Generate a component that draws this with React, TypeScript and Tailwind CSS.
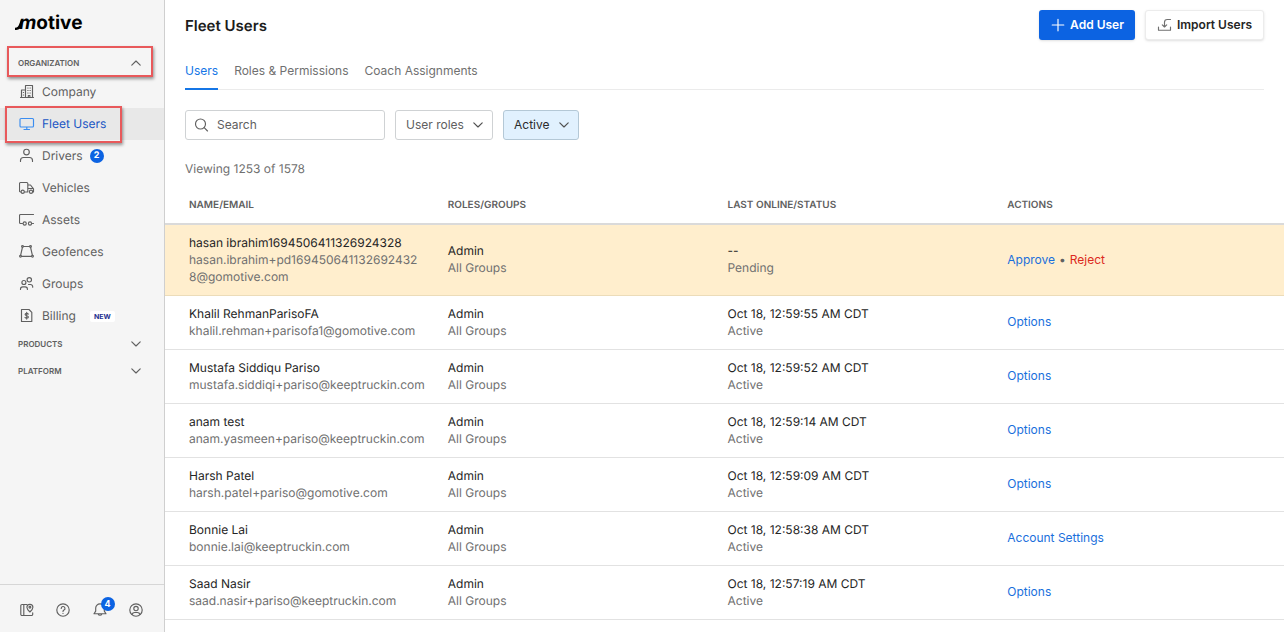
import type { ReactNode } from "react";
import clsx from "clsx";

type IconProps = {
  children: ReactNode;
  className?: string;
};

function Icon({ children, className }: IconProps) {
  return (
    <svg
      viewBox="0 0 16 16"
      fill="none"
      stroke="currentColor"
      strokeWidth="1.15"
      strokeLinecap="round"
      strokeLinejoin="round"
      aria-hidden="true"
      className={clsx("size-4 shrink-0", className)}
    >
      {children}
    </svg>
  );
}

function Chevron({ up = false, className }: { up?: boolean; className?: string }) {
  return (
    <Icon className={className}>
      <path d={up ? "M3.8 10.2 8 6l4.2 4.2" : "M3.8 5.8 8 10l4.2-4.2"} />
    </Icon>
  );
}

const navIcons = {
  company: (
    <>
      <path d="M6.5 13.5v-12h7v12M2.5 13.5V6h4M1.500 13.500h13M9.300 13.500v-2h1.600v2" />
      <path d="M8.800 4h.3M11 4h.3M8.800 6.500h.3M11 6.500h.3M8.800 9h.3M11 9h.3M4.300 8.500h.3M4.300 11h.3" />
    </>
  ),
  monitor: (
    <path d="M2 2.500h11.500a1 1 0 0 1 1 1v6.500a1 1 0 0 1-1 1H2a1 1 0 0 1-1-1v-6.500a1 1 0 0 1 1-1ZM7.800 11v2.500M5 13.500h5.500" />
  ),
  driver: (
    <>
      <circle cx="7.500" cy="4" r="2.800" />
      <path d="M1.500 13.500v-1a3 3 0 0 1 3-3h6a3 3 0 0 1 3 3v1" />
    </>
  ),
  truck: (
    <>
      <path d="M2 12H1.500a1 1 0 0 1-1-1V3.500a1 1 0 0 1 1-1h6.300a1 1 0 0 1 1 1V12H5.500M8.800 5h2.700l3 3.800V12h-.5M8.800 8.500h5.500" />
      <circle cx="3.700" cy="11.700" r="1.600" />
      <circle cx="12" cy="11.700" r="1.600" />
    </>
  ),
  trailer: (
    <>
      <path d="M14.500 2.500H1.500a1 1 0 0 0-1 1v7a1 1 0 0 0 1 1h2M13.500 11.500h1" />
      <circle cx="5.700" cy="11.500" r="1.600" />
      <circle cx="11" cy="11.500" r="1.600" />
    </>
  ),
  geofence: (
    <>
      <path d="M4.500 2.500h6M3.400 3.500l-1.800 7.800M11.600 3.500l1.800 7.800M2.500 12.300h10" />
      <circle cx="3.500" cy="2.500" r=".9" />
      <circle cx="11.500" cy="2.500" r=".9" />
      <circle cx="1.500" cy="12.300" r=".9" />
      <circle cx="13.500" cy="12.300" r=".9" />
    </>
  ),
  groups: (
    <>
      <circle cx="4.900" cy="6.500" r="2" />
      <path d="M1.500 13.500V13a2.200 2.200 0 0 1 2.200-2.200h2.500A2.200 2.200 0 0 1 8.400 13v.5" />
      <circle cx="10.300" cy="3.800" r="2.200" />
      <path d="M9.500 8.500h2a2.200 2.200 0 0 1 2.200 2.200v.5" />
    </>
  ),
  billing: (
    <>
      <path d="M2.500 1.500h7.500l2.800 2.800v9.200H2.500Z" />
      <path d="M9.300 6.100C8.900 5.500 8.400 5.300 7.700 5.300c-.9 0-1.600.4-1.600 1.200 0 1.700 3.300.8 3.300 2.500 0 .8-.7 1.200-1.700 1.200-.8 0-1.400-.3-1.700-.8M7.700 4.300v6.800" />
    </>
  ),
};

type NavItem = {
  label: string;
  icon: keyof typeof navIcons;
  active?: boolean;
  count?: number;
  isNew?: boolean;
};

const navItems: NavItem[] = [
  { label: "Company", icon: "company" },
  { label: "Fleet Users", icon: "monitor", active: true },
  { label: "Drivers", icon: "driver", count: 2 },
  { label: "Vehicles", icon: "truck" },
  { label: "Assets", icon: "trailer" },
  { label: "Geofences", icon: "geofence" },
  { label: "Groups", icon: "groups" },
  { label: "Billing", icon: "billing", isNew: true },
];

type User = {
  name: string;
  email: string;
  lastOnline: string;
  status: string;
  action?: string;
};

const users: User[] = [
  {
    name: "hasan ibrahim1694506411326924328",
    email: "hasan.ibrahim+pd1694506411326924328@gomotive.com",
    lastOnline: "--",
    status: "Pending",
  },
  {
    name: "Khalil RehmanParisoFA",
    email: "khalil.rehman+parisofa1@gomotive.com",
    lastOnline: "Oct 18, 12:59:55 AM CDT",
    status: "Active",
    action: "Options",
  },
  {
    name: "Mustafa Siddiqu Pariso",
    email: "mustafa.siddiqi+pariso@keeptruckin.com",
    lastOnline: "Oct 18, 12:59:52 AM CDT",
    status: "Active",
    action: "Options",
  },
  {
    name: "anam test",
    email: "anam.yasmeen+pariso@keeptruckin.com",
    lastOnline: "Oct 18, 12:59:14 AM CDT",
    status: "Active",
    action: "Options",
  },
  {
    name: "Harsh Patel",
    email: "harsh.patel+pariso@gomotive.com",
    lastOnline: "Oct 18, 12:59:09 AM CDT",
    status: "Active",
    action: "Options",
  },
  {
    name: "Bonnie Lai",
    email: "bonnie.lai@keeptruckin.com",
    lastOnline: "Oct 18, 12:58:38 AM CDT",
    status: "Active",
    action: "Account Settings",
  },
  {
    name: "Saad Nasir",
    email: "saad.nasir+pariso@keeptruckin.com",
    lastOnline: "Oct 18, 12:57:19 AM CDT",
    status: "Active",
    action: "Options",
  },
];

const columns = ["NAME/EMAIL", "ROLES/GROUPS", "LAST ONLINE/STATUS", "ACTIONS"];

function Highlight({ className }: { className: string }) {
  return (
    <span
      className={clsx(
        "pointer-events-none absolute z-10 border-2 border-[#e8595b] shadow-[1px_2px_3px_rgba(0,0,0,0.4)]",
        className,
      )}
    />
  );
}

function Logo() {
  return (
    <a
      href="#home"
      className="ml-[15px] flex h-[46px] items-center text-[19px] font-bold text-black"
    >
      <svg viewBox="0 0 8 16" aria-hidden="true" className="-mr-1 h-4 w-2">
        <path
          d="M0 15V12.800C2.500 12.800 3.500 11 4.300 9L6 4.500H8L6.500 10.500C5.500 14 3.500 15 0 15Z"
          fill="currentColor"
        />
      </svg>
      <span>
        <span className="italic">m</span>otive
      </span>
    </a>
  );
}

function SectionButton({ label }: { label: string }) {
  return (
    <button
      type="button"
      className="flex h-[27px] w-full items-center justify-between pr-5 pb-1 pl-[18px] text-[8px] font-semibold"
    >
      {label}
      <Chevron />
    </button>
  );
}

function Sidebar() {
  return (
    <aside className="flex w-[165px] shrink-0 flex-col border-r border-[#cfcfcf] bg-[#f5f5f5] text-[#606060]">
      <Logo />
      <nav className="flex-1">
        <button
          type="button"
          className="relative flex h-[30px] w-full items-center justify-between pt-1 pr-5 pl-[18px] text-[8px] font-semibold"
        >
          ORGANIZATION
          <Chevron up />
          <Highlight className="top-0 right-[11px] -bottom-px left-[7px]" />
        </button>
        <ul>
          {navItems.map((item) => (
            <li key={item.label}>
              <a
                href={`#${item.icon}`}
                className={clsx(
                  "relative flex h-8 items-center pl-[19px] text-[12px]",
                  item.active && "bg-[#e8e8e8] text-[#1a56c4]",
                )}
              >
                <Icon className={clsx(item.active && "text-[#3b8df0]")}>
                  {navIcons[item.icon]}
                </Icon>
                <span className="ml-[7px]">{item.label}</span>
                {item.count && (
                  <span className="ml-[7px] flex size-[14px] items-center justify-center rounded-full bg-[#0c63e2] text-[9px] font-bold text-white">
                    {item.count}
                  </span>
                )}
                {item.isNew && (
                  <span className="ml-[14px] rounded-xs bg-white px-1 text-[7px] leading-[11px] font-bold text-[#1d2f8f]">
                    NEW
                  </span>
                )}
                {item.active && (
                  <Highlight className="-top-0.5 -bottom-[3px] left-[5px] w-[117px]" />
                )}
              </a>
            </li>
          ))}
        </ul>
        <SectionButton label="PRODUCTS" />
        <SectionButton label="PLATFORM" />
      </nav>
      <div className="flex h-12 items-center justify-between border-t border-[#d6d6d6] pt-0.5 pr-5 pl-[19px]">
        <button type="button" aria-label="Guide">
          <Icon>
            <path d="M8 2.500H3a1.200 1.200 0 0 0-1.200 1.200v8.600A1.200 1.200 0 0 0 3 13.500h9.500a1.200 1.200 0 0 0 1.200-1.200v-1.500M4.800 2.500v11" />
            <path d="M10.900 10C8.700 8 7.900 6.800 7.900 5.300a3 3 0 0 1 6 0c0 1.500-.8 2.700-3 4.700Z" />
            <circle cx="10.900" cy="5.200" r=".9" />
          </Icon>
        </button>
        <button type="button" aria-label="Help">
          <Icon>
            <circle cx="8" cy="8" r="6.200" />
            <path d="M6.200 6.400a1.900 1.900 0 1 1 2.800 1.700c-.7.400-1 .7-1 1.300M8 11.400v.1" />
          </Icon>
        </button>
        <button type="button" aria-label="Notifications" className="relative">
          <Icon>
            <path d="M8 1.800a4.300 4.300 0 0 0-4.300 4.300v3L2 11.700h12l-1.700-2.600v-3A4.300 4.300 0 0 0 8 1.800ZM6.200 12a1.900 1.900 0 0 0 3.600 0" />
          </Icon>
          <span className="absolute -top-[5px] left-[9px] flex size-[14px] items-center justify-center rounded-full bg-[#0c63e2] text-[9px] font-bold text-white">
            4
          </span>
        </button>
        <button type="button" aria-label="Account">
          <Icon>
            <circle cx="8" cy="8" r="6.200" />
            <circle cx="8" cy="6.500" r="2.200" />
            <path d="M4 12.500c.5-1.500 1.500-2 2.600-2h2.800c1.100 0 2.100.5 2.600 2" />
          </Icon>
        </button>
      </div>
    </aside>
  );
}

function FilterSelect({
  label,
  value,
  active = false,
}: {
  label: string;
  value: string;
  active?: boolean;
}) {
  return (
    <div className="relative">
      <select
        aria-label={label}
        className={clsx(
          "h-[30px] appearance-none rounded-[3px] border pr-7 pl-[10px] text-[12px]",
          active
            ? "border-[#b4c8d6] bg-[#e1f1fe] text-[#2b2b2b]"
            : "border-[#cfd2d4] bg-white text-[#606060]",
        )}
      >
        <option>{value}</option>
      </select>
      <Chevron className="pointer-events-none absolute top-[7px] right-[7px] text-[#505050]" />
    </div>
  );
}

function UsersTable() {
  return (
    <table className="w-full table-fixed text-left text-[12px] leading-[17px]">
      <thead>
        <tr className="h-[38px] border-b-2 border-[#dadada] text-[10px] text-[#606060]">
          {columns.map((column) => (
            <th key={column} className="pt-0.5 pl-[3px] font-semibold first:pl-6">
              {column}
            </th>
          ))}
        </tr>
      </thead>
      <tbody>
        {users.map((user) => (
          <tr
            key={user.email}
            className={clsx(
              "border-b",
              user.action ? "border-[#e2e2e2]" : "border-[#ecdcb9] bg-[#ffeecd]",
            )}
          >
            <td className="pt-[9px] pr-5 pb-[10px] pl-6">
              <div className="text-[#252525]">{user.name}</div>
              <div className="break-all text-[#707070]">{user.email}</div>
            </td>
            <td className="pb-0.5 pl-[3px]">
              <div className="text-[#252525]">Admin</div>
              <div className="text-[#707070]">All Groups</div>
            </td>
            <td className="pb-0.5 pl-[3px]">
              <div className="text-[#252525]">{user.lastOnline}</div>
              <div className="text-[#707070]">{user.status}</div>
            </td>
            <td className="pb-0.5 pl-[3px] text-[#606060]">
              {user.action ? (
                <button type="button" className="text-[#1a6fdc]">
                  {user.action}
                </button>
              ) : (
                <div className="flex gap-1">
                  <button type="button" className="text-[#1a6fdc]">
                    Approve
                  </button>
                  <span>•</span>
                  <button type="button" className="text-[#dc2a20]">
                    Reject
                  </button>
                </div>
              )}
            </td>
          </tr>
        ))}
      </tbody>
    </table>
  );
}

export default function App() {
  return (
    <div className="flex h-screen overflow-hidden bg-white font-['Inter',sans-serif] [text-rendering:geometricPrecision]">
      <Sidebar />
      <main className="min-w-0 flex-1 overflow-hidden">
        <div className="px-5">
          <header className="flex h-[50px] items-center justify-between">
            <h1 className="pt-0.5 text-[15px] font-semibold text-[#1c1c1c]">
              Fleet Users
            </h1>
            <div className="flex gap-[10px] text-[12px] font-semibold">
              <button
                type="button"
                className="flex h-[30px] items-center gap-1 rounded-[3px] bg-[#0c63e2] px-[11px] text-white shadow-sm"
              >
                <Icon>
                  <path d="M8 2.200v11.600M2.200 8h11.600" />
                </Icon>
                Add User
              </button>
              <button
                type="button"
                className="flex h-[30px] items-center gap-1 rounded-[3px] border border-[#ececec] bg-white px-[11px] text-[#252525] shadow-sm"
              >
                <Icon className="text-[#707070]">
                  <path d="M1.500 10v3.200h12V10M13.500 2.500h-3.200A2.800 2.800 0 0 0 7.500 5.300v4.500M5.300 7.800l2.200 2.200 2.200-2.200" />
                </Icon>
                Import Users
              </button>
            </div>
          </header>

          <div
            role="tablist"
            className="flex h-10 gap-4 border-b border-[#ebebeb] text-[12px] text-[#707070]"
          >
            <button
              type="button"
              role="tab"
              aria-selected="true"
              className="-mb-px border-b-2 border-[#1576e6] pt-1 text-[#1576e6]"
            >
              Users
            </button>
            <button type="button" role="tab" aria-selected="false" className="pt-[3px]">
              Roles &amp; Permissions
            </button>
            <button type="button" role="tab" aria-selected="false" className="pt-[3px]">
              Coach Assignments
            </button>
          </div>

          <div className="mt-5 flex gap-[10px]">
            <label className="flex h-[30px] w-[200px] items-center rounded-[3px] border border-[#cfd2d4] pl-2 text-[#606060]">
              <Icon>
                <circle cx="6.500" cy="7" r="5" />
                <path d="m10.200 10.700 3.300 3.300" />
              </Icon>
              <input
                type="text"
                placeholder="Search"
                aria-label="Search"
                className="ml-[7px] w-full min-w-0 text-[12px] outline-none placeholder:text-[#606060]"
              />
            </label>
            <FilterSelect label="User roles" value="User roles" />
            <FilterSelect label="Status" value="Active" active />
          </div>

          <p className="mt-5 mb-[9px] text-[12px] leading-[17px] text-[#707070]">
            Viewing 1253 of 1578
          </p>
        </div>
        <UsersTable />
      </main>
    </div>
  );
}
